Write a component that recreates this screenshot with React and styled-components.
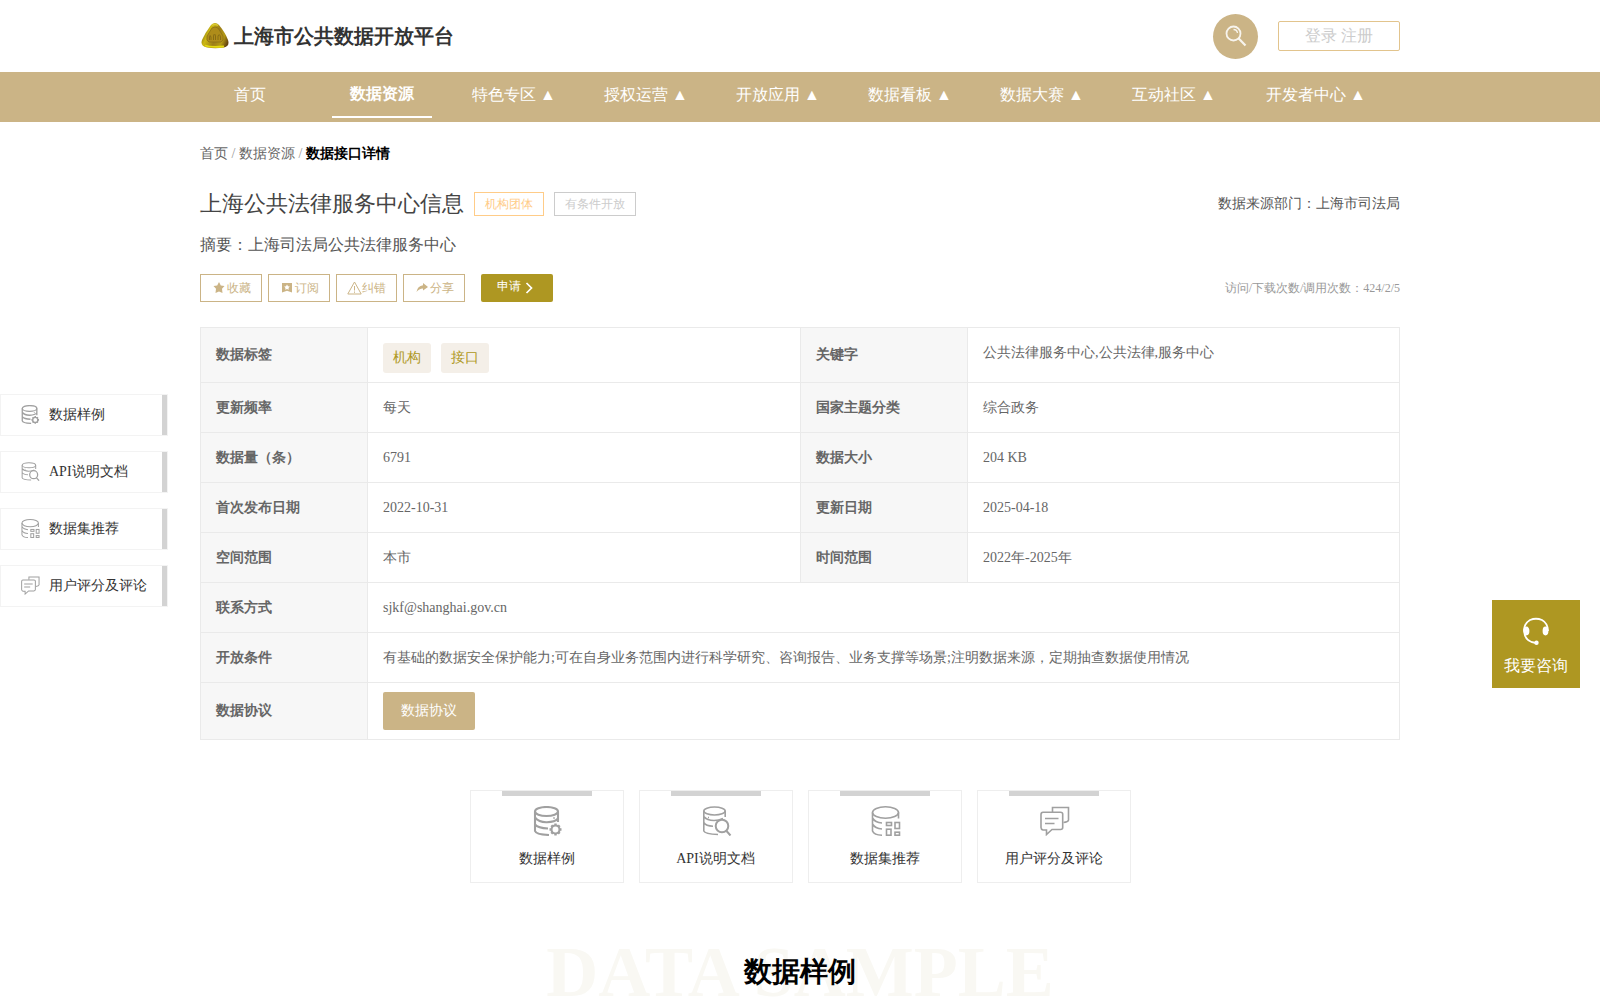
import styled, { createGlobalStyle } from "styled-components";

const GlobalStyle = createGlobalStyle`
  * {
    box-sizing: border-box;
  }
  body {
    margin: 0;
    background: #fff;
    font-family: "Liberation Serif", serif;
    font-size: 14px;
    color: #666;
  }
`;

const Page = styled.div`
  height: 1000px;
  overflow: hidden;
  position: relative;
`;

const Container = styled.div`
  width: 1200px;
  margin: 0 auto;
`;

const Header = styled(Container)`
  height: 72px;
  display: flex;
  align-items: center;
`;

const Brand = styled.h1`
  margin: 0;
  flex: 1;
  display: flex;
  align-items: center;
  gap: 4px;
  font-size: 20px;
  line-height: 24px;
  color: #333;
  padding-left: 1px;

  svg {
    margin-top: -2px;
  }
`;

const SearchButton = styled.button`
  width: 45px;
  height: 45px;
  margin: 1px 20px 0 0;
  padding: 0;
  border: none;
  border-radius: 50%;
  background: #cbb486;
`;

const Login = styled.div`
  width: 122px;
  height: 30px;
  border: 1px solid #e2c48d;
  border-radius: 2px;
  color: #ccc;
  font-size: 16px;
  line-height: 27px;
  text-align: center;
`;

const Nav = styled.nav`
  height: 50px;
  background: #cbb486;
`;

const NavList = styled(Container)`
  display: flex;
  gap: 32px;
`;

const NavItem = styled.a`
  min-width: 100px;
  height: 46px;
  padding: 0 10px;
  margin-right: -4px;
  font-size: 16px;
  line-height: ${(props) => (props.$active ? "43px" : "45px")};
  font-weight: ${(props) => (props.$active ? 700 : 400)};
  border-bottom: 2px solid ${(props) => (props.$active ? "#fff" : "transparent")};
  color: #fff;
  text-align: center;
  white-space: nowrap;

  &:not(:last-child) {
    width: 100px;
    margin-right: 0;
    padding: 0;
  }
`;

const Breadcrumb = styled.div`
  height: 62px;
  line-height: 64px;
  white-space: pre;
  color: #999;

  span {
    color: #666;
  }
  b {
    color: #000;
  }
`;

const Row = styled.div`
  display: flex;
  align-items: center;
`;

const TitleRow = styled(Row)`
  height: 40px;
  gap: 10px;
`;

const Title = styled.h2`
  margin: 0;
  font-size: 22px;
  font-weight: 400;
  line-height: 40px;
  color: #444;
`;

const Badge = styled.span`
  height: 24px;
  padding: 0 10px;
  border: 1px solid ${(props) => props.$color};
  color: ${(props) => props.$color};
  font-size: 12px;
  line-height: 22px;
`;

const Source = styled.span`
  margin-left: auto;
  color: #555;
`;

const Summary = styled.p`
  margin: 0;
  height: 50px;
  line-height: 42px;
  font-size: 16px;
  color: #555;
`;

const Actions = styled(Row)`
  gap: 6px;
  height: 28px;
  font-size: 12px;
`;

const ActionButton = styled.a`
  width: 62px;
  height: 28px;
  padding-left: 12px;
  display: flex;
  align-items: center;
  border: 1px solid #cbb486;
  color: #cbb486;
  line-height: 26px;

  &:nth-child(3) {
    width: 61px;
    padding-left: 10px;
  }
`;

const ApplyButton = styled.a`
  width: 72px;
  height: 28px;
  margin-left: 10px;
  padding-left: 16px;
  display: flex;
  gap: 1px;
  border-radius: 2px;
  background: #ae9722;
  color: #fff;
  line-height: 24px;
`;

const Visits = styled.span`
  margin-left: auto;
  color: #999;
`;

const InfoTable = styled.div`
  display: grid;
  grid-template-columns: 167px 433px 167px 1fr;
  grid-template-rows: 55px repeat(6, 50px) 57px;
  margin-top: 25px;
  border: solid #eaeaea;
  border-width: 0 1px 1px 0;
`;

const Cell = styled.div`
  display: flex;
  align-items: center;
  gap: 10px;
  padding: 0 15px;
  border: solid #eaeaea;
  border-width: 1px 0 0 1px;
`;

const Label = styled(Cell)`
  background: #f7f7f7;
  font-weight: 700;
`;

const Value = styled(Cell)`
  grid-column: ${(props) => (props.$wide ? "span 3" : "auto")};
  padding-bottom: ${(props) => props.$raise || 0}px;
  padding-top: ${(props) => props.$drop || 0}px;
`;

const Tag = styled.span`
  height: 30px;
  padding: 0 10px;
  border-radius: 3px;
  background: #f4efe8;
  color: #ae9722;
  line-height: 30px;
`;

const Agreement = styled.button`
  width: 92px;
  height: 38px;
  padding: 0;
  border: none;
  border-radius: 2px;
  background: #cbb486;
  color: #fff;
  font: inherit;
`;

const Cards = styled.div`
  display: flex;
  justify-content: center;
  gap: 15px;
  margin-top: 50px;
`;

const Card = styled.a`
  width: 154px;
  height: 93px;
  display: flex;
  flex-direction: column;
  align-items: center;
  border: 1px solid #eee;
  color: #333;
  line-height: 20px;

  &::before {
    content: "";
    width: 90px;
    height: 5px;
    background: #d3d3d3;
  }
  svg {
    margin: 10px 0 13px 2px;
  }
`;

const SectionTitle = styled.div`
  position: relative;
  height: 110px;
  margin-top: 52px;
  text-align: center;
  font-size: 72px;
  font-weight: 700;
  line-height: 74px;
  color: #f9f8f3;
`;

const SectionName = styled.h3`
  position: absolute;
  inset: 0;
  margin: 0;
  font-size: 28px;
  line-height: 74px;
  color: #000;
`;

const SideMenu = styled.aside`
  position: absolute;
  top: 394px;
  left: 0;
  display: flex;
  flex-direction: column;
  gap: 15px;
`;

const SideItem = styled.a`
  width: 168px;
  height: 42px;
  padding-left: 20px;
  display: flex;
  align-items: center;
  gap: 9px;
  border: 1px solid #f3f3f3;
  color: #333;
  line-height: 18px;

  svg {
    margin-top: -2px;
  }

  &::after {
    content: "";
    width: 5px;
    height: 40px;
    margin-left: auto;
    background: #d3d3d3;
  }
`;

const Consult = styled.a`
  position: absolute;
  top: 600px;
  right: 20px;
  width: 88px;
  height: 88px;
  padding-top: 17px;
  display: flex;
  flex-direction: column;
  align-items: center;
  background: #ae9722;
  color: #fff;
  font-size: 16px;
  line-height: 40px;
`;

function Logo() {
  return (
    <svg width="29" height="27" viewBox="0 0 29 27">
      <defs>
        <linearGradient id="gold" x1="0" y1="0.3" x2="1" y2="0.7">
          <stop offset="0" stopColor="#776314" />
          <stop offset="0.25" stopColor="#cdb913" />
          <stop offset="0.55" stopColor="#9c7d18" />
          <stop offset="0.8" stopColor="#b49a14" />
          <stop offset="1" stopColor="#66450f" />
        </linearGradient>
      </defs>
      <path
        d="M10 3Q14 -1 18 3Q24.500 11 27 18Q29 24 23 25.500Q14 27 6 25.500Q-1 24 1 18Q4 11 10 3Z"
        fill="url(#gold)"
      />
      <path d="M4 23.500Q10 25.800 23 24.500" stroke="#e3da10" strokeWidth="1.800" fill="none" />
      <path d="M11 3.500Q14 1.500 17 3.500" stroke="#d9ca32" strokeWidth="1.500" fill="none" />
      <path
        d="M11 6Q14 4 17 6L22 14Q23 19 20 20H8Q5 19 6 14Z"
        fill="#ae8c1a"
        stroke="#8a7016"
        strokeWidth="0.800"
      />
      <path
        d="M8.500 18V15Q9 12 10 15V18M12.500 18V14Q13.500 10 14.500 14V18M17 18V14Q18.500 11 19.500 15V18"
        stroke="#7e6414"
        strokeWidth="0.800"
        fill="none"
      />
    </svg>
  );
}

function SearchIcon() {
  return (
    <svg width="45" height="45" viewBox="0 0 45 45" fill="none" stroke="#fff" strokeOpacity=".85">
      <circle cx="20.500" cy="19.500" r="7" strokeWidth="1.800" />
      <path d="M25.700 24.500L32.500 31.500" strokeWidth="2.200" />
      <path d="M20.500 15.500Q24 15.500 24.500 19" strokeWidth="1.300" />
    </svg>
  );
}

// 30x30 drawings shared by the side menu and the cards
function SectionIcon({ name, size = 30 }) {
  return (
    <svg
      width={size}
      height={size}
      viewBox="0 0 30 30"
      fill="none"
      stroke="#a0a0a0"
      strokeWidth={name === "sample" ? 2.1 : 1.6}
    >
      {name === "sample" && (
        <>
          <ellipse cx="13.500" cy="5.500" rx="11.500" ry="4.500" />
          <path d="M2 5.500V25Q3 28.500 16 29M25 5.500V16M2 11.500Q6 16.500 14 16.200Q22 16 25 12.500M2 18.500Q5 22 15 22.500" />
          <circle cx="21" cy="12" r="0.500" strokeWidth="1" />
          <circle cx="22.500" cy="23.500" r="4" />
          <path
            d="M22.500 17.500V19.500M22.500 27.500V29.500M16.500 23.500H18.500M26.500 23.500H28.500M18.300 19.300L19.700 20.700M25.300 26.300L26.700 27.700M18.300 27.700L19.700 26.300M25.300 20.700L26.700 19.300"
            strokeWidth="2.400"
          />
        </>
      )}
      {name === "api" && (
        <>
          <ellipse cx="12.500" cy="5" rx="10.700" ry="4" />
          <path d="M1.800 5V25Q3 28 16 28.500M23.200 5V11M1.800 10.500Q5 14.500 12 14.500Q17 14.500 21 12.500M1.800 16.500Q4 20 11 20.200" />
          <path d="M6 11.500H7" />
          <circle cx="20" cy="20" r="6.300" strokeWidth="2" />
          <path d="M24.500 25L28.500 29.500" strokeWidth="2" />
        </>
      )}
      {name === "recommend" && (
        <>
          <ellipse cx="14.500" cy="6.500" rx="13" ry="5.700" />
          <path d="M1.500 6.500V25Q3 29 11 29.200M27.500 6.500V12.500M1.500 12Q4 16.500 11 17M1.500 18Q4 22.500 11 23" />
          <rect x="15.500" y="16.500" width="5" height="3" />
          <rect x="24" y="16.500" width="4.500" height="6" />
          <rect x="15.500" y="23.200" width="4.500" height="6" />
          <rect x="24" y="26.200" width="4.500" height="3" />
        </>
      )}
      {name === "comment" && (
        <>
          <path d="M12.500 6V1.500H28.500V14Q28 16 23.500 16.500" />
          <path d="M3 6.200H20.500Q22.700 6.200 22.700 8V21.500Q22.700 23.500 20.500 23.500H12L6.500 28.500V24H3Q1 23.500 1 21.500V8.500Q1 6.200 3 6.200Z" />
          <path d="M5 12.500H18.500M5 17.500H14.500" />
        </>
      )}
    </svg>
  );
}

function ActionIcon({ name }) {
  if (name === "warn") {
    return (
      <svg width="15" height="14" viewBox="0 0 15 14" fill="none" stroke="#cbb486">
        <path d="M7.500 1L14.200 13H0.800ZM7.500 5V9.500M7.500 10.500V11.800" />
      </svg>
    );
  }
  return (
    <svg width="14" height="14" viewBox="0 0 14 14" fill="#cbb486">
      {name === "star" && (
        <path d="M6 1L7.800 4.500L11.500 5.100L9 7.800L9.500 12L6 10.500L2.500 12L3 7.800L0.500 5.100L4.200 4.500Z" />
      )}
      {name === "subscribe" && (
        <path
          fillRule="evenodd"
          d="M1 2H11V11.500L6 9.700L1 11.500ZM6 3.500L5 5.300L3.200 5.500L4.500 7L4.200 8.700L6 8L7.800 8.700L7.500 7L8.800 5.500L7 5.300Z"
        />
      )}
      {name === "share" && (
        <path d="M7 2L12 6L7 9.500V7.500Q3 7.500 0.500 11Q1.500 5 7 4.300Z" />
      )}
    </svg>
  );
}

function HeadsetIcon() {
  return (
    <svg width="28" height="29" viewBox="0 0 28 29" fill="none" stroke="#fff" strokeWidth="1.800">
      <path d="M2 14Q2 6.500 8 3Q14 0.500 20 3Q26 6.500 26 14M2 14Q3 25 14 26" />
      <ellipse cx="4.500" cy="14" rx="2" ry="3.500" fill="#fff" />
      <ellipse cx="23.500" cy="14" rx="2" ry="3.500" fill="#fff" />
      <circle cx="14.500" cy="25.800" r="1.300" fill="#fff" />
    </svg>
  );
}

const navItems = [
  "首页",
  "数据资源",
  "特色专区 ▲",
  "授权运营 ▲",
  "开放应用 ▲",
  "数据看板 ▲",
  "数据大赛 ▲",
  "互动社区 ▲",
  "开发者中心 ▲",
];

const actions = [
  { icon: "star", text: "收藏" },
  { icon: "subscribe", text: "订阅" },
  { icon: "warn", text: "纠错" },
  { icon: "share", text: "分享" },
];

const fields = [
  ["更新频率", "每天"],
  ["国家主题分类", "综合政务"],
  ["数据量（条）", "6791"],
  ["数据大小", "204 KB"],
  ["首次发布日期", "2022-10-31"],
  ["更新日期", "2025-04-18"],
  ["空间范围", "本市"],
  ["时间范围", "2022年-2025年"],
  ["联系方式", "sjkf@shanghai.gov.cn", true],
  [
    "开放条件",
    "有基础的数据安全保护能力;可在自身业务范围内进行科学研究、咨询报告、业务支撑等场景;注明数据来源，定期抽查数据使用情况",
    true,
  ],
];

const sections = [
  { icon: "sample", text: "数据样例" },
  { icon: "api", text: "API说明文档" },
  { icon: "recommend", text: "数据集推荐" },
  { icon: "comment", text: "用户评分及评论" },
];

function Field({ label, value, wide }) {
  return (
    <>
      <Label>{label}</Label>
      <Value $wide={wide}>{value}</Value>
    </>
  );
}

export default function App() {
  return (
    <Page>
      <GlobalStyle />
      <Header>
        <Brand>
          <Logo />
          上海市公共数据开放平台
        </Brand>
        <SearchButton>
          <SearchIcon />
        </SearchButton>
        <Login>登录 注册</Login>
      </Header>
      <Nav>
        <NavList>
          {navItems.map((item, i) => (
            <NavItem key={item} $active={i === 1}>
              {item}
            </NavItem>
          ))}
        </NavList>
      </Nav>

      <Container>
        <Breadcrumb>
          <span>首页</span> / <span>数据资源</span> / <b>数据接口详情</b>
        </Breadcrumb>
        <TitleRow>
          <Title>上海公共法律服务中心信息</Title>
          <Badge $color="#fc8">机构团体</Badge>
          <Badge $color="#ccc">有条件开放</Badge>
          <Source>数据来源部门：上海市司法局</Source>
        </TitleRow>
        <Summary>摘要：上海司法局公共法律服务中心</Summary>
        <Actions>
          {actions.map((action) => (
            <ActionButton key={action.icon}>
              <ActionIcon name={action.icon} />
              {action.text}
            </ActionButton>
          ))}
          <ApplyButton>
            申请
            <svg width="14" height="28" fill="none" stroke="#fff" strokeWidth="1.700">
              <path d="M4.500 9L9.500 14L4.500 19" />
            </svg>
          </ApplyButton>
          <Visits>访问/下载次数/调用次数：424/2/5</Visits>
        </Actions>

        <InfoTable>
          <Label>数据标签</Label>
          <Value $drop={6}>
            <Tag>机构</Tag>
            <Tag>接口</Tag>
          </Value>
          <Label>关键字</Label>
          <Value $raise={4}>公共法律服务中心,公共法律,服务中心</Value>
          {fields.map(([label, value, wide]) => (
            <Field key={label} label={label} value={value} wide={wide} />
          ))}
          <Label>数据协议</Label>
          <Value $wide>
            <Agreement>数据协议</Agreement>
          </Value>
        </InfoTable>

        <Cards>
          {sections.map((section) => (
            <Card key={section.icon}>
              <SectionIcon name={section.icon} />
              {section.text}
            </Card>
          ))}
        </Cards>

        <SectionTitle>
          DATA SAMPLE
          <SectionName>数据样例</SectionName>
        </SectionTitle>
      </Container>

      <SideMenu>
        {sections.map((section) => (
          <SideItem key={section.icon}>
            <SectionIcon name={section.icon} size={19} />
            {section.text}
          </SideItem>
        ))}
      </SideMenu>
      <Consult>
        <HeadsetIcon />
        我要咨询
      </Consult>
    </Page>
  );
}
